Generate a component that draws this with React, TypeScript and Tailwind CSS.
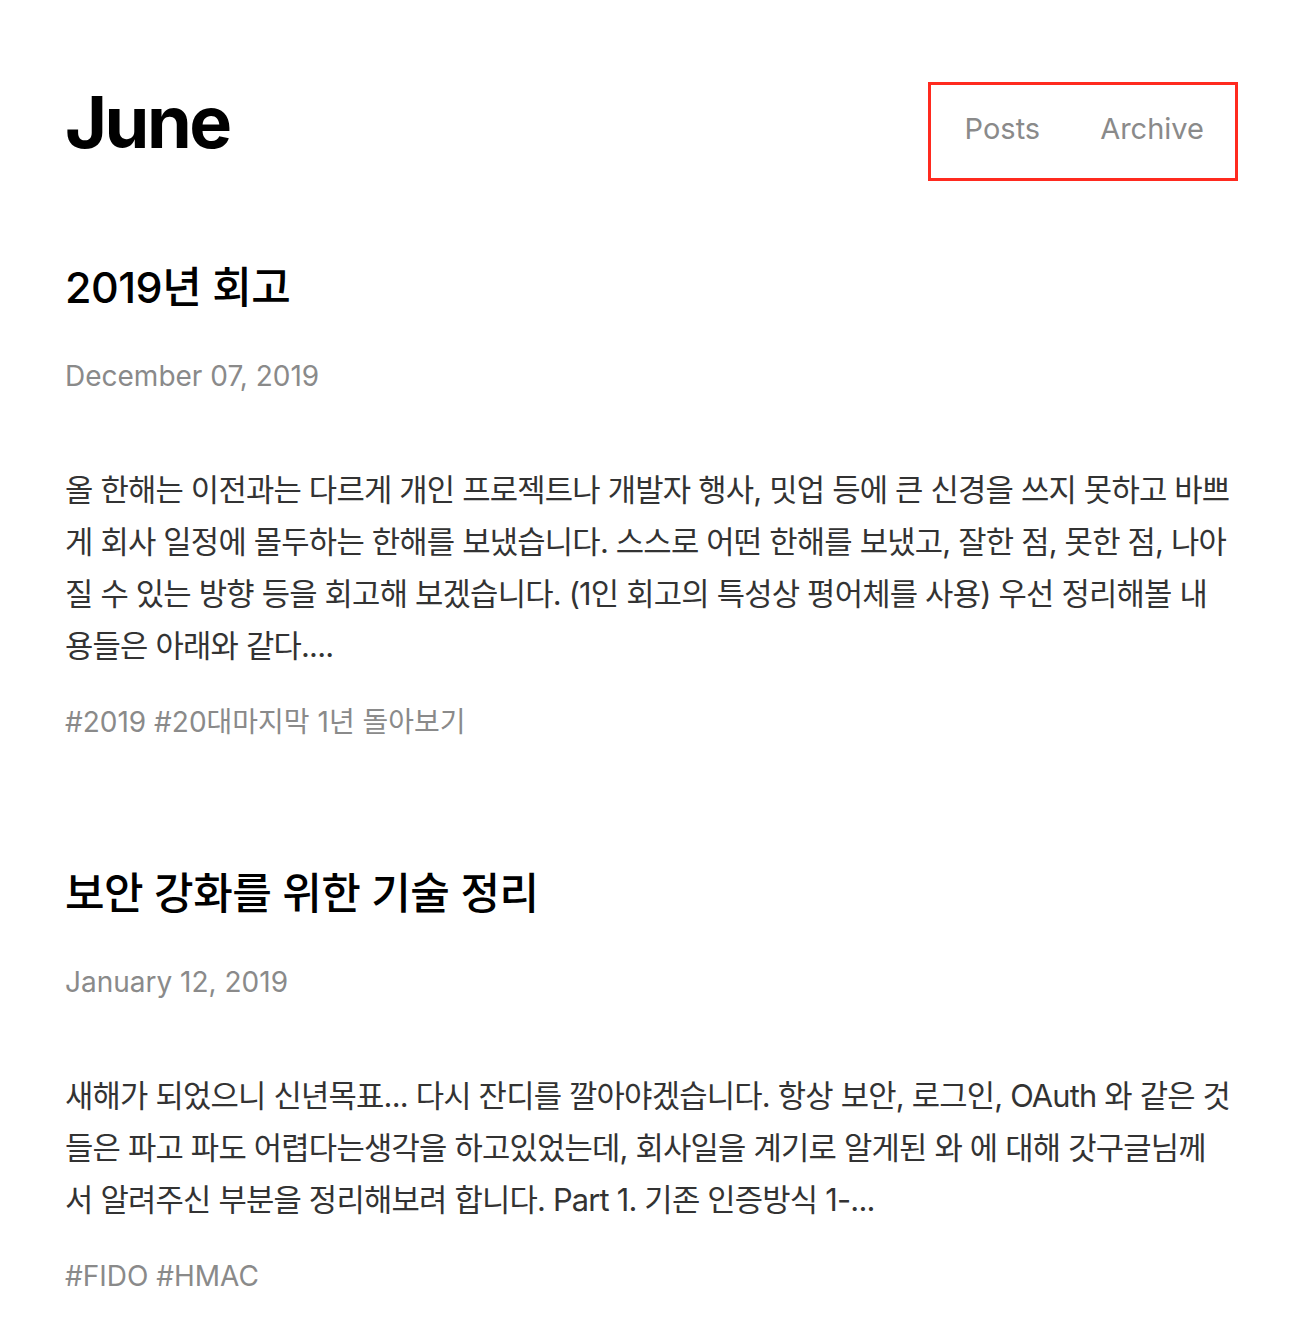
import React from 'react';

type Post = {
  title: string;
  date: string;
  excerpt: string;
  tags: string[];
};

const POSTS: Post[] = [
  {
    title: '2019년 회고',
    date: 'December 07, 2019',
    excerpt:
      '올 한해는 이전과는 다르게 개인 프로젝트나 개발자 행사, 밋업 등에 큰 신경을 쓰지 못하고 바쁘게 회사 일정에 몰두하는 한해를 보냈습니다. 스스로 어떤 한해를 보냈고, 잘한 점, 못한 점, 나아질 수 있는 방향 등을 회고해 보겠습니다. (1인 회고의 특성상 평어체를 사용) 우선 정리해볼 내용들은 아래와 같다....',
    tags: ['2019', '20대마지막 1년 돌아보기'],
  },
  {
    title: '보안 강화를 위한 기술 정리',
    date: 'January 12, 2019',
    excerpt:
      '새해가 되었으니 신년목표... 다시 잔디를 깔아야겠습니다. 항상 보안, 로그인, OAuth 와 같은 것들은 파고 파도 어렵다는생각을 하고있었는데, 회사일을 계기로 알게된 와 에 대해 갓구글님께서 알려주신 부분을 정리해보려 합니다. Part 1. 기존 인증방식 1-...',
    tags: ['FIDO', 'HMAC'],
  },
];

const App: React.FC = () => {
  return (
    <div className="min-h-screen bg-white font-['Inter','Noto_Sans_CJK_KR',sans-serif] text-black">
      <div className="px-[65px]">
        {/* Header */}
        <header className="flex items-start justify-between pt-[86px]">
          <a href="#/" className="text-[72px] font-bold leading-none tracking-[-2.5px] text-black">
            June
          </a>
          <div className="relative mt-[28px]">
            <nav className="flex text-[29px] leading-none text-[#8a8a8a]">
              <a href="#/posts" className="px-[30px]">
                Posts
              </a>
              <a href="#/archive" className="pl-[30px] pr-[29px]">
                Archive
              </a>
            </nav>
            {/* highlight box */}
            <div className="pointer-events-none absolute -top-[32px] -bottom-[38px] -left-[7px] -right-[5px] border-[3px] border-[#ff2a1f]"></div>
          </div>
        </header>

        {/* Posts */}
        <main className="mt-[110px] flex flex-col gap-[138px]">
          {POSTS.map((post, idx) => (
            <article key={idx}>
              <h2 className="text-[43px] font-medium leading-[38px] tracking-[-0.5px] text-black">
                <a href="#/post">{post.title}</a>
              </h2>
              <p className="mt-[56px] text-[28px] leading-none text-[#8a8a8a]">{post.date}</p>
              <p className="mt-[74px] text-[30.8px] leading-[52px] tracking-[-0.8px] text-[#333]">
                {post.excerpt}
              </p>
              <p className="mt-[36px] text-[28px] leading-none text-[#8a8a8a]">
                {post.tags.map((tag) => `#${tag}`).join(' ')}
              </p>
            </article>
          ))}
        </main>
      </div>
    </div>
  );
};

export default App;
